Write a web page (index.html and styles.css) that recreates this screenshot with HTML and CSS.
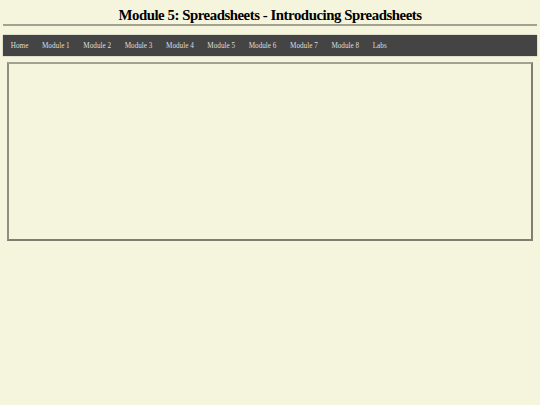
FILE: index.html
```html
<!DOCTYPE html>
<html>
<head>
<meta charset="utf-8">
<title>Module 5: Spreadsheets - Introducing Spreadsheets</title>
<link rel="stylesheet" href="styles.css">
</head>
<body>
<header class="page-header">
  <h1 class="title">Module 5: Spreadsheets - Introducing Spreadsheets</h1>
</header>
<nav class="nav">
  <a class="nav-link" href="#">Home</a>
  <a class="nav-link" href="#">Module 1</a>
  <a class="nav-link" href="#">Module 2</a>
  <a class="nav-link" href="#">Module 3</a>
  <a class="nav-link" href="#">Module 4</a>
  <a class="nav-link" href="#">Module 5</a>
  <a class="nav-link" href="#">Module 6</a>
  <a class="nav-link" href="#">Module 7</a>
  <a class="nav-link" href="#">Module 8</a>
  <a class="nav-link" href="#">Labs</a>
</nav>
<main class="content">
  <div class="frame"></div>
</main>
</body>
</html>
```

FILE: styles.css
```css
html, body {
  margin: 0;
  padding: 0;
}
body {
  background: #f5f4dc;
  font-family: "Liberation Serif", "Times New Roman", serif;
  padding: 0 3px;
}
.page-header {
  border-bottom: 2px solid #a3a292;
  padding-top: 8px;
  padding-bottom: 1px;
}
.title {
  margin: 0;
  text-align: center;
  font-size: 14.8px;
  letter-spacing: -0.45px;
  font-weight: bold;
  line-height: 15px;
  color: #000;
}
.nav {
  display: flex;
  align-items: center;
  margin-top: 9px;
  height: 21px;
  background: #444444;
  padding-left: 1px;
  box-shadow: 0 0 1px #777;
}
.nav-link {
  color: #dedede;
  text-decoration: none;
  font-size: 7.2px;
  padding: 1px 6.8px 0;
  line-height: 20px;
}
.content {
  padding: 6px 4px 0;
}
.frame {
  height: 175px;
  border-style: solid;
  border-width: 2px;
  border-color: #a2a292 #7e7e72 #7e7e72 #8f8f82;
}
```
